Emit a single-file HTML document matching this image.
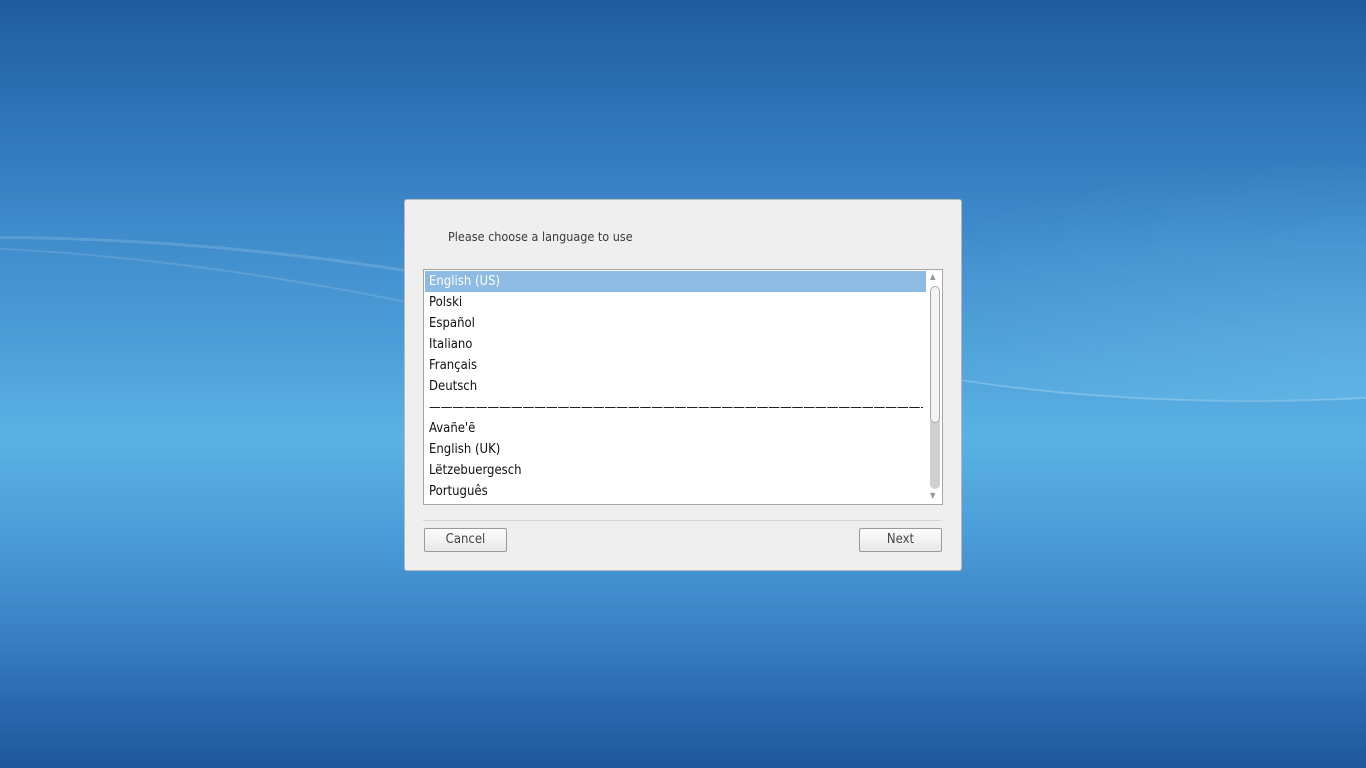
<!DOCTYPE html>
<html><head><style>
html,body{margin:0;padding:0;width:1366px;height:768px;overflow:hidden;}
body{position:relative;font-family:"DejaVu Sans","Liberation Sans",sans-serif;font-stretch:condensed;
background:linear-gradient(180deg,#1f5c9e 0%,#2e74b7 15%,#3f8bcb 30%,#4d9ed8 45%,#5ab2e4 57%,#4d9fd9 68%,#3d86c8 80%,#2a68ae 92%,#1f579b 100%);}
.wave{position:absolute;border-radius:50%;}
.dlg{position:absolute;left:404px;top:199px;width:556px;height:370px;background:#efefef;border:1px solid #b8b8b8;border-radius:3px;}
.title{position:absolute;left:43px;top:29px;font-size:12.5px;color:#3a3a3a;}
.list{position:absolute;left:18px;top:69px;width:518px;height:234px;background:#fff;border:1px solid #a6a6a6;}
.row{position:absolute;left:1px;width:501px;height:21px;line-height:21px;font-size:13px;color:#111;padding-left:4px;box-sizing:border-box;white-space:nowrap;overflow:hidden;}
.sel{background:#8dbbe3;color:#fff;}
.sb{position:absolute;left:504px;top:1px;width:13px;height:232px;}
.thumb{position:absolute;left:2px;top:15px;width:8px;height:135px;border:1px solid #aaa;border-radius:5px;background:#f4f4f4;}
.track{position:absolute;left:2px;top:150px;width:10px;height:68px;background:#d0d0d0;border-radius:0 0 5px 5px;}
.sep{position:absolute;left:18px;top:320px;width:518px;height:1px;background:#d4d4d4;}
.btn{position:absolute;top:328px;width:81px;height:22px;border:1px solid #9a9a9a;border-radius:2px;background:linear-gradient(#fdfdfd,#e8e8e8);font-size:13px;color:#444;text-align:center;line-height:22px;}
</style></head><body>
<div class="wave" style="left:-400px;top:250px;width:1300px;height:300px;border-top:3px solid rgba(255,255,255,0.15);transform:rotate(6deg);"></div>
<div class="wave" style="left:-400px;top:275px;width:1300px;height:300px;border-top:2px solid rgba(255,255,255,0.12);transform:rotate(9deg);"></div>
<div class="wave" style="left:700px;top:120px;width:1100px;height:280px;border-bottom:2px solid rgba(255,255,255,0.2);background:radial-gradient(ellipse at 60% 90%,rgba(120,200,240,0.35),transparent 60%);"></div>
<div class="dlg">
 <div class="title">Please choose a language to use</div>
 <div class="list">
  <div class="row sel" style="top:1px">English (US)</div>
  <div class="row" style="top:22px">Polski</div>
  <div class="row" style="top:43px">Español</div>
  <div class="row" style="top:64px">Italiano</div>
  <div class="row" style="top:85px">Français</div>
  <div class="row" style="top:106px">Deutsch</div>
  <div class="row" style="top:127px;width:498px">——————————————————————————————————————————————————</div>
  <div class="row" style="top:148px">Avañe'ẽ</div>
  <div class="row" style="top:169px">English (UK)</div>
  <div class="row" style="top:190px">Lëtzebuergesch</div>
  <div class="row" style="top:211px">Português</div>
  <div class="sb">
   <div style="position:absolute;left:2px;top:1px;font-size:8px;color:#999">▲</div>
   <div class="track"></div>
   <div class="thumb"></div>
   <div style="position:absolute;left:2px;top:220px;font-size:8px;color:#999">▼</div>
  </div>
 </div>
 <div class="sep"></div>
 <div class="btn" style="left:19px">Cancel</div>
 <div class="btn" style="left:454px">Next</div>
</div>
</body></html>
